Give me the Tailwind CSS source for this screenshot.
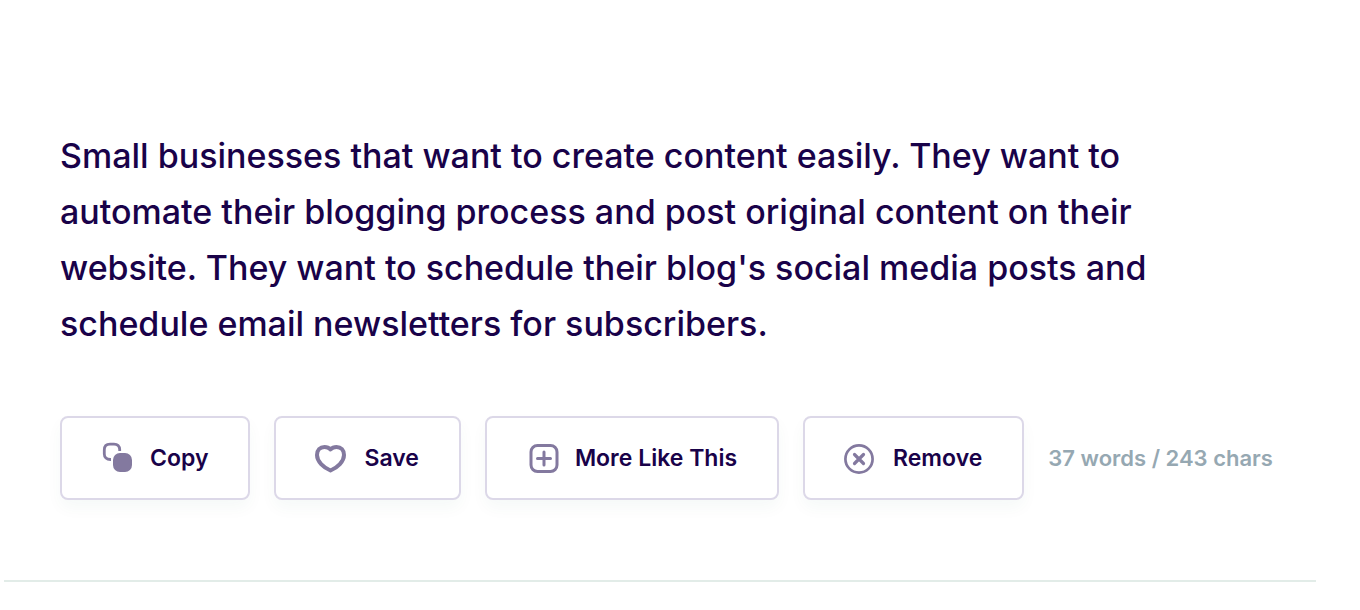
<!DOCTYPE html>
<html lang="en">
<head>
  <meta charset="UTF-8" />
  <meta name="viewport" content="width=device-width, initial-scale=1.0"/>
  <title>Generated Content</title>
  <script src="https://cdn.jsdelivr.net/npm/@tailwindcss/browser@4"></script>
</head>
<body class="min-h-screen bg-white font-['Inter','Liberation_Sans',sans-serif] text-[#190249]">

  <!-- Result -->
  <article class="ml-1 mr-11 border-b-2 border-[#e2ece8] px-14 pt-32 pb-20">
    <p class="max-w-[1100px] text-[34px] leading-[56px] font-medium">
      Small businesses that want to create content easily. They want to automate their blogging process and post original content on their website. They want to schedule their blog's social media posts and schedule email newsletters for subscribers.
    </p>

    <!-- Actions -->
    <div class="mt-16 -mr-10 flex items-center gap-6 whitespace-nowrap">
      <button type="button" class="flex h-[84px] items-center gap-4 rounded-lg border-2 border-[#dcd8e8] bg-white px-10 text-[23px] font-semibold shadow-[0_8px_16px_rgba(20,90,80,0.04)]">
        <svg class="size-8 overflow-visible text-[#83799f]" viewBox="0 0 32 32" fill="none" aria-hidden="true">
          <path d="M9 17.500H8.500C4.500 17.500 2.300 15.300 2.300 12V8C2.300 4.200 4.500 2.200 8 2.200h4c3.500 0 5.500 2 5.700 5.500V9" stroke="currentColor" stroke-width="2.800"/>
          <rect x="11" y="11" width="19" height="19" rx="7" fill="currentColor"/>
        </svg>
        Copy
      </button>

      <button type="button" class="flex h-[84px] items-center gap-4 rounded-lg border-2 border-[#dcd8e8] bg-white px-10 text-[23px] font-semibold shadow-[0_8px_16px_rgba(20,90,80,0.04)]">
        <svg class="size-8 overflow-visible text-[#83799f]" viewBox="0 0 32 32" fill="none" aria-hidden="true">
          <path d="M14.500 7.500C12.700 5.500 10.700 5 8.500 5 4 5 1 8.200 1 13c0 6.500 6.500 12.500 13.500 15.500 7-3 13.500-9 13.500-15.500 0-4.800-3-8-7.500-8-2.200 0-4.200.5-6 2.500z" stroke="currentColor" stroke-width="4" stroke-linejoin="round"/>
        </svg>
        Save
      </button>

      <button type="button" class="flex h-[84px] items-center gap-4 rounded-lg border-2 border-[#dcd8e8] bg-white px-10 text-[23px] font-semibold shadow-[0_8px_16px_rgba(20,90,80,0.04)]">
        <svg class="size-8 overflow-visible text-[#83799f]" viewBox="0 0 32 32" fill="none" stroke="currentColor" stroke-linecap="round" aria-hidden="true">
          <rect x="4" y="3.500" width="26" height="26" rx="6.500" stroke-width="3"/>
          <path d="M17 10v13M10.500 16.500h13" stroke-width="3"/>
        </svg>
        More Like This
      </button>

      <button type="button" class="flex h-[84px] items-center gap-4 rounded-lg border-2 border-[#dcd8e8] bg-white px-10 text-[23px] font-semibold shadow-[0_8px_16px_rgba(20,90,80,0.04)]">
        <svg class="size-8 overflow-visible text-[#83799f]" viewBox="0 0 32 32" fill="none" stroke="currentColor" stroke-linecap="round" aria-hidden="true">
          <circle cx="14" cy="17" r="13.600" stroke-width="2.700"/>
          <path d="M9.500 12.500l9 9M18.500 12.500l-9 9" stroke-width="3.200"/>
        </svg>
        Remove
      </button>

      <span class="text-[22px] font-semibold text-[#96a8b2]">37 words / 243 chars</span>
    </div>
  </article>

</body>
</html>
